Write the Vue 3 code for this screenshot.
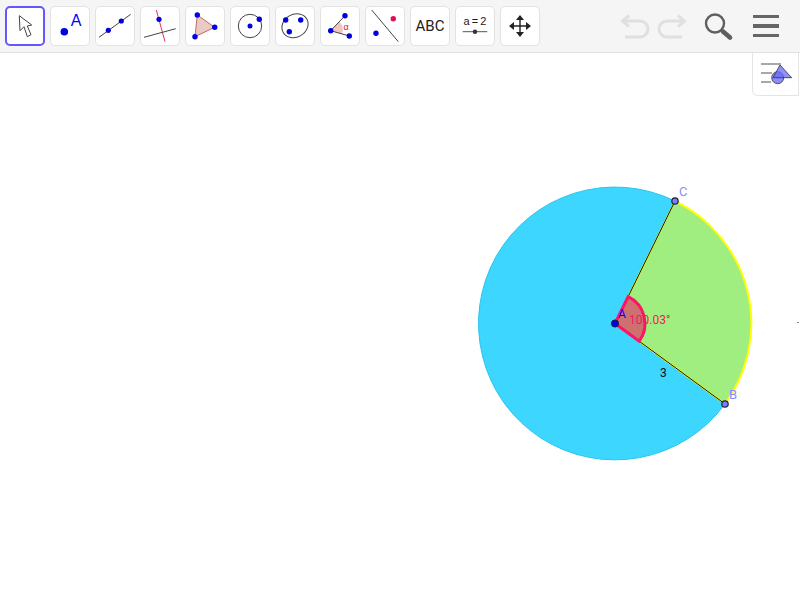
<script setup>
// toolbar buttons are drawn one by one below, the canvas uses page coordinates
</script>

<template>
  <div class="app">
    <header class="toolbar">
      <div class="tools">
        <button class="tool active">
          <svg viewBox="0 0 40 40"><path d="M14.3 9.7 15 24.7 19 20.7 22.3 30.7 26 28.7 22.3 20 26.7 19Z" fill="#fff" stroke="#444" stroke-width="1"/></svg>
        </button>
        <button class="tool">
          <svg viewBox="0 0 40 40"><circle cx="14.3" cy="25.7" r="3.8" fill="#0000e0"/><text x="26" y="19.5" class="icon-a">A</text></svg>
        </button>
        <button class="tool">
          <svg viewBox="0 0 40 40"><line x1="4" y1="31.3" x2="35.7" y2="8.3" class="ln"/><circle cx="13.3" cy="24.3" r="2.6" class="pt"/><circle cx="26.3" cy="15" r="2.6" class="pt"/></svg>
        </button>
        <button class="tool">
          <svg viewBox="0 0 40 40"><line x1="16.3" y1="4" x2="25" y2="35.7" stroke="#e6305a" stroke-width="1"/><line x1="4" y1="31.3" x2="35.7" y2="22.7" class="ln"/><circle cx="19" cy="13.3" r="2.6" class="pt"/></svg>
        </button>
        <button class="tool">
          <svg viewBox="0 0 40 40"><path d="M12.3 9 29.7 21.3 10 30.7Z" fill="#ecc9c2" stroke="#b96a6a" stroke-width="1"/><circle cx="12.3" cy="9" r="2.7" class="pt"/><circle cx="29.7" cy="21.3" r="2.7" class="pt"/><circle cx="10" cy="30.7" r="2.7" class="pt"/></svg>
        </button>
        <button class="tool">
          <svg viewBox="0 0 40 40"><circle cx="20" cy="20" r="11.7" fill="none" class="ln"/><circle cx="20" cy="20" r="2.5" class="pt"/><circle cx="29.3" cy="13.3" r="2.7" class="pt"/></svg>
        </button>
        <button class="tool">
          <svg viewBox="0 0 40 40"><ellipse cx="20" cy="19.7" rx="13.6" ry="11.4" transform="rotate(-30 20 19.7)" fill="none" class="ln"/><circle cx="10.7" cy="14" r="2.7" class="pt"/><circle cx="25.7" cy="14" r="2.7" class="pt"/><circle cx="14.3" cy="25.7" r="2.7" class="pt"/></svg>
        </button>
        <button class="tool">
          <svg viewBox="0 0 40 40"><path d="M10.7 24.7 19.5 15.7A12 12 0 0 1 22 28Z" fill="#f0c8c0"/><path d="M25 9.7 10.7 24.7 29.3 30" fill="none" class="ln"/><circle cx="10.7" cy="24.7" r="2.7" class="pt"/><circle cx="25" cy="9.7" r="2.7" class="pt"/><circle cx="29.3" cy="30" r="2.7" class="pt"/><text x="26" y="23.5" class="icon-alpha">α</text></svg>
        </button>
        <button class="tool">
          <svg viewBox="0 0 40 40"><line x1="6.7" y1="4" x2="33.3" y2="35.7" class="ln"/><circle cx="28.3" cy="12.7" r="2.7" fill="#e0104f"/><circle cx="11" cy="27.3" r="2.7" class="pt"/></svg>
        </button>
        <button class="tool tool-text">ABC</button>
        <button class="tool">
          <svg viewBox="0 0 40 40"><text x="20" y="19" class="icon-eq">a = 2</text><line x1="7.7" y1="25.7" x2="32.3" y2="25.7" stroke="#555" stroke-width="1"/><circle cx="20" cy="25.7" r="2.2" fill="#333"/></svg>
        </button>
        <button class="tool">
          <svg viewBox="0 0 40 40"><path d="M20 12V28M12 20H28" stroke="#222" stroke-width="1.4"/><path d="M20 9 24 14H16ZM20 31 24 26H16ZM9 20 14 16V24ZM31 20 26 16V24Z" fill="#222"/></svg>
        </button>
      </div>

      <div class="actions">
        <svg class="undo" viewBox="0 0 32 28"><path d="M5 8H21A8 8 0 0 1 21 24H6M10 2.5 3.5 8 10 13.5"/></svg>
        <svg class="undo redo" viewBox="0 0 32 28"><path d="M5 8H21A8 8 0 0 1 21 24H6M10 2.5 3.5 8 10 13.5"/></svg>
        <svg class="search" viewBox="0 0 32 32"><circle cx="11" cy="10.5" r="9" fill="none" stroke="#5f5f5f" stroke-width="2.4"/><path d="M19 18.5 26 24.5" stroke="#5f5f5f" stroke-width="4.6" stroke-linecap="round"/></svg>
        <div class="menu"><span></span><span></span><span></span></div>
      </div>
    </header>

    <main class="canvas">
      <svg class="board" width="800" height="547" viewBox="0 53 800 547">
        <path d="M615 323.5 725 404A136.4 136.4 0 1 1 675 201Z" fill="#3dd6ff" stroke="#2cc4ee" stroke-width="1"/>
        <path d="M615 323.5 675 201A136.4 136.4 0 0 1 725 404Z" fill="#a0ee80"/>
        <path d="M675 201A136.4 136.4 0 0 1 725 404" fill="none" stroke="#ffff00" stroke-width="2"/>
        <path d="M615 323.5 675 201M615 323.5 725 404" stroke="#ffff00" stroke-width="1.6"/>
        <path d="M615 323.5 675 201M615 323.5 725 404" stroke="#111" stroke-width="1"/>
        <path d="M615 323.5 628.2 296.6A30 30 0 0 1 639.2 341.2Z" fill="#cf7070" stroke="#ff1464" stroke-width="3"/>
        <circle cx="615" cy="323.5" r="3.6" fill="#0000ee" stroke="#123" stroke-width="1"/>
        <circle cx="675" cy="201" r="3.2" fill="#7d7dff" stroke="#222" stroke-width="1.2"/>
        <circle cx="725" cy="404" r="3.2" fill="#7d7dff" stroke="#222" stroke-width="1.2"/>
        <text x="618" y="318" class="lbl lbl-a">A</text>
        <text x="629" y="324" class="lbl lbl-ang">100.03°</text>
        <text x="660" y="377" class="lbl lbl-n">3</text>
        <text x="679" y="196" class="lbl lbl-p">C</text>
        <text x="729" y="399" class="lbl lbl-p">B</text>
        <rect x="797" y="322" width="2" height="1" fill="#888"/>
      </svg>

      <button class="style-btn">
        <svg viewBox="0 0 47 43">
          <path d="M9 11H29M9 20H20M9 29H19" stroke="#a8a8a8" stroke-width="2"/>
          <circle cx="25.7" cy="24.7" r="6" fill="#8c8cff" stroke="#555" stroke-width="1"/>
          <path d="M28 12 39.7 24.7H21Z" fill="#6a6aff" fill-opacity=".75" stroke="#333" stroke-width=".8"/>
        </svg>
      </button>
    </main>
  </div>
</template>

<style scoped>
.app {
  width: 800px;
  height: 600px;
  overflow: hidden;
  background: #fff;
  font-family: "Roboto", "Liberation Sans", sans-serif;
}
.toolbar {
  height: 52px;
  background: #f5f5f5;
  border-bottom: 1px solid #e0e0e0;
  display: flex;
  justify-content: space-between;
  align-items: flex-start;
}
.tools {
  display: flex;
  gap: 5px;
  padding: 6px 0 0 5px;
}
.tool {
  width: 40px;
  height: 40px;
  padding: 0;
  background: #fff;
  border: 1px solid #e2e2e2;
  border-radius: 5px;
  display: flex;
  align-items: center;
  justify-content: center;
  position: relative;
}
.tool svg {
  position: absolute;
  inset: -1px;
  width: 40px;
  height: 40px;
}
.tool.active {
  border: 2px solid #6557ff;
}
.tool.active svg {
  inset: -2px;
}
.tool-text {
  font-family: "Roboto", "Liberation Sans", sans-serif;
  font-size: 15px;
  color: #222;
}
.ln {
  stroke: #444;
  stroke-width: 1;
}
.pt {
  fill: #0000e0;
}
.icon-a {
  font-size: 16px;
  fill: #0000ff;
  text-anchor: middle;
}
.icon-alpha {
  font-size: 9px;
  fill: #e0104f;
  text-anchor: middle;
}
.icon-eq {
  font-size: 11px;
  word-spacing: -1px;
  fill: #222;
  text-anchor: middle;
}
.actions {
  display: flex;
  align-items: flex-start;
  padding: 13px 21px 0 0;
}
.undo {
  width: 32px;
  height: 28px;
  fill: none;
  stroke: #e0e0e0;
  stroke-width: 3;
}
.redo {
  transform: scaleX(-1);
  margin-left: 5px;
}
.search {
  width: 32px;
  height: 32px;
  margin-left: 16px;
}
.menu {
  width: 26px;
  margin-left: 17px;
  padding-top: 2px;
  display: flex;
  flex-direction: column;
  gap: 6px;
}
.menu span {
  display: block;
  height: 3.4px;
  background: #666;
}
.canvas {
  position: relative;
  height: 547px;
}
.board {
  display: block;
}
.lbl {
  font-family: "Roboto", "Liberation Sans", sans-serif;
  font-size: 12px;
}
.lbl-a {
  fill: #0000ff;
}
.lbl-ang {
  fill: #f0185f;
}
.lbl-n {
  fill: #111;
}
.lbl-p {
  fill: #8a8aff;
  font-size: 13px;
}
.style-btn {
  position: absolute;
  top: 0;
  right: 1px;
  width: 47px;
  height: 43px;
  padding: 0;
  background: #fff;
  border: 1px solid #e4e4e4;
  border-top: none;
  border-radius: 0 0 0 6px;
  overflow: hidden;
}
.style-btn svg {
  display: block;
  width: 47px;
  height: 43px;
  margin: 0 0 0 -1px;
}
</style>
